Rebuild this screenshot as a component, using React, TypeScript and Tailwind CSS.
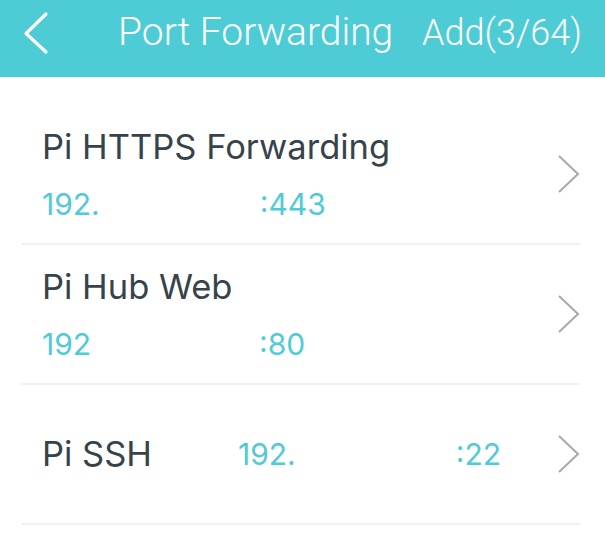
import React from 'react'

const Chevron = () => (
  <svg width="22" height="38" viewBox="0 0 22 38" className="shrink-0">
    <polyline points="1,1 20,19 1,37" fill="none" stroke="#a9a9a9" strokeWidth="2" />
  </svg>
)

type Rule = {
  name: string
  ip: string
  port: string
  gap: string
}

const Row = ({ name, ip, port, gap }: Rule) => (
  <div className="ml-[21px] mr-[25px] flex h-[140px] items-center border-b-2 border-[#f2f2f2] pl-[21px]">
    <div className="flex-1 font-['Inter',sans-serif]">
      <div className="text-[34.5px] leading-[40px] text-[#37434a]">{name}</div>
      <div className="mt-[19px] flex text-[30px] leading-[36px] text-[#4ecbd6]">
        <span>{ip}</span>
        <span className={gap} />
        <span>{port}</span>
      </div>
    </div>
    <Chevron />
  </div>
)

export default function App() {
  return (
    <div className="h-[553px] w-[605px] overflow-hidden bg-white font-['Roboto',sans-serif]">
      <header className="flex h-[77px] items-start bg-[#4eccd6] text-white">
        <svg width="30" height="46" viewBox="0 0 30 46" className="ml-[20px] mt-[10px]">
          <polyline
            points="26,4 6,23.5 26,42"
            fill="none"
            stroke="#ffffff"
            strokeWidth="3.2"
            strokeLinecap="round"
            strokeLinejoin="round"
          />
        </svg>
        <h1 className="ml-[68px] pt-[13px] text-[39px] font-light leading-[39px]">Port Forwarding</h1>
        <span className="ml-auto mr-[23px] pt-[15px] text-[36px] font-light leading-[36px]">Add(3/64)</span>
      </header>

      <div className="pt-[28px]">
        <Row name="Pi HTTPS Forwarding" ip="192." port=":443" gap="w-[160px]" />
        <Row name="Pi Hub Web" ip="192" port=":80" gap="w-[168px]" />

        <div className="ml-[21px] mr-[25px] flex h-[140px] items-center border-b-2 border-[#f2f2f2] pl-[21px] font-['Inter',sans-serif]">
          <div className="w-[196px] text-[34.5px] leading-[40px] text-[#37434a]">Pi SSH</div>
          <div className="flex flex-1 text-[30px] leading-[36px] text-[#4ecbd6]">
            <span>192.</span>
            <span className="w-[160px]" />
            <span>:22</span>
          </div>
          <Chevron />
        </div>
      </div>
    </div>
  )
}
